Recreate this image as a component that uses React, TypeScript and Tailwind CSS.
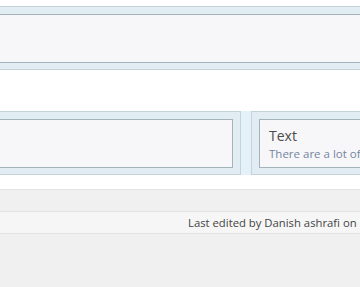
export default function App() {
  return (
    <div className="h-[287px] w-[360px] overflow-hidden bg-[#f0f0f0] font-['Open_Sans',sans-serif]">
      <div className="h-[190px] border-b border-[#e3e3e3] bg-white pt-[6px]">
        {/* top band */}
        <div className="border-y border-[#c4d2d9] bg-[#e2edf3] pt-[7px] pb-[6px]">
          <div className="h-[49px] border-y border-[#a2b3bb] bg-[#f7f7f9]" />
        </div>

        {/* card row */}
        <div className="mt-[41px] flex overflow-hidden">
          <div className="ml-[-59px] flex bg-[#e4f1f8]">
            <div className="w-[300px] border border-[#c4d2d9] bg-[#e2edf3] px-[7px] pt-[7px] pb-[6px]">
              <div className="h-[49px] border border-[#a2b3bb] bg-[#f7f7f9]" />
            </div>
            <div className="w-[10px]" />
            <div className="w-[300px] shrink-0 border border-[#c4d2d9] bg-[#e2edf3] px-[7px] pt-[7px] pb-[6px]">
              <div className="h-[49px] border border-[#a2b3bb] bg-[#f7f7f9] px-[9px] pt-[6px]">
                <div className="text-[14px] leading-[20px] font-medium text-[#4a4a4a]">Text</div>
                <div className="whitespace-nowrap text-[11.5px] leading-[16px] text-[#7585a0]">
                  There are a lot of ways to write
                </div>
              </div>
            </div>
          </div>
        </div>
      </div>

      <div className="mt-[21px] h-[23px] border-y border-[#e2e2e2] bg-[#f6f6f6] pl-[188px] whitespace-nowrap text-[11.3px] leading-[21px] text-[#444]">
        Last edited by Danish ashrafi on 12/04/2019
      </div>
    </div>
  );
}
